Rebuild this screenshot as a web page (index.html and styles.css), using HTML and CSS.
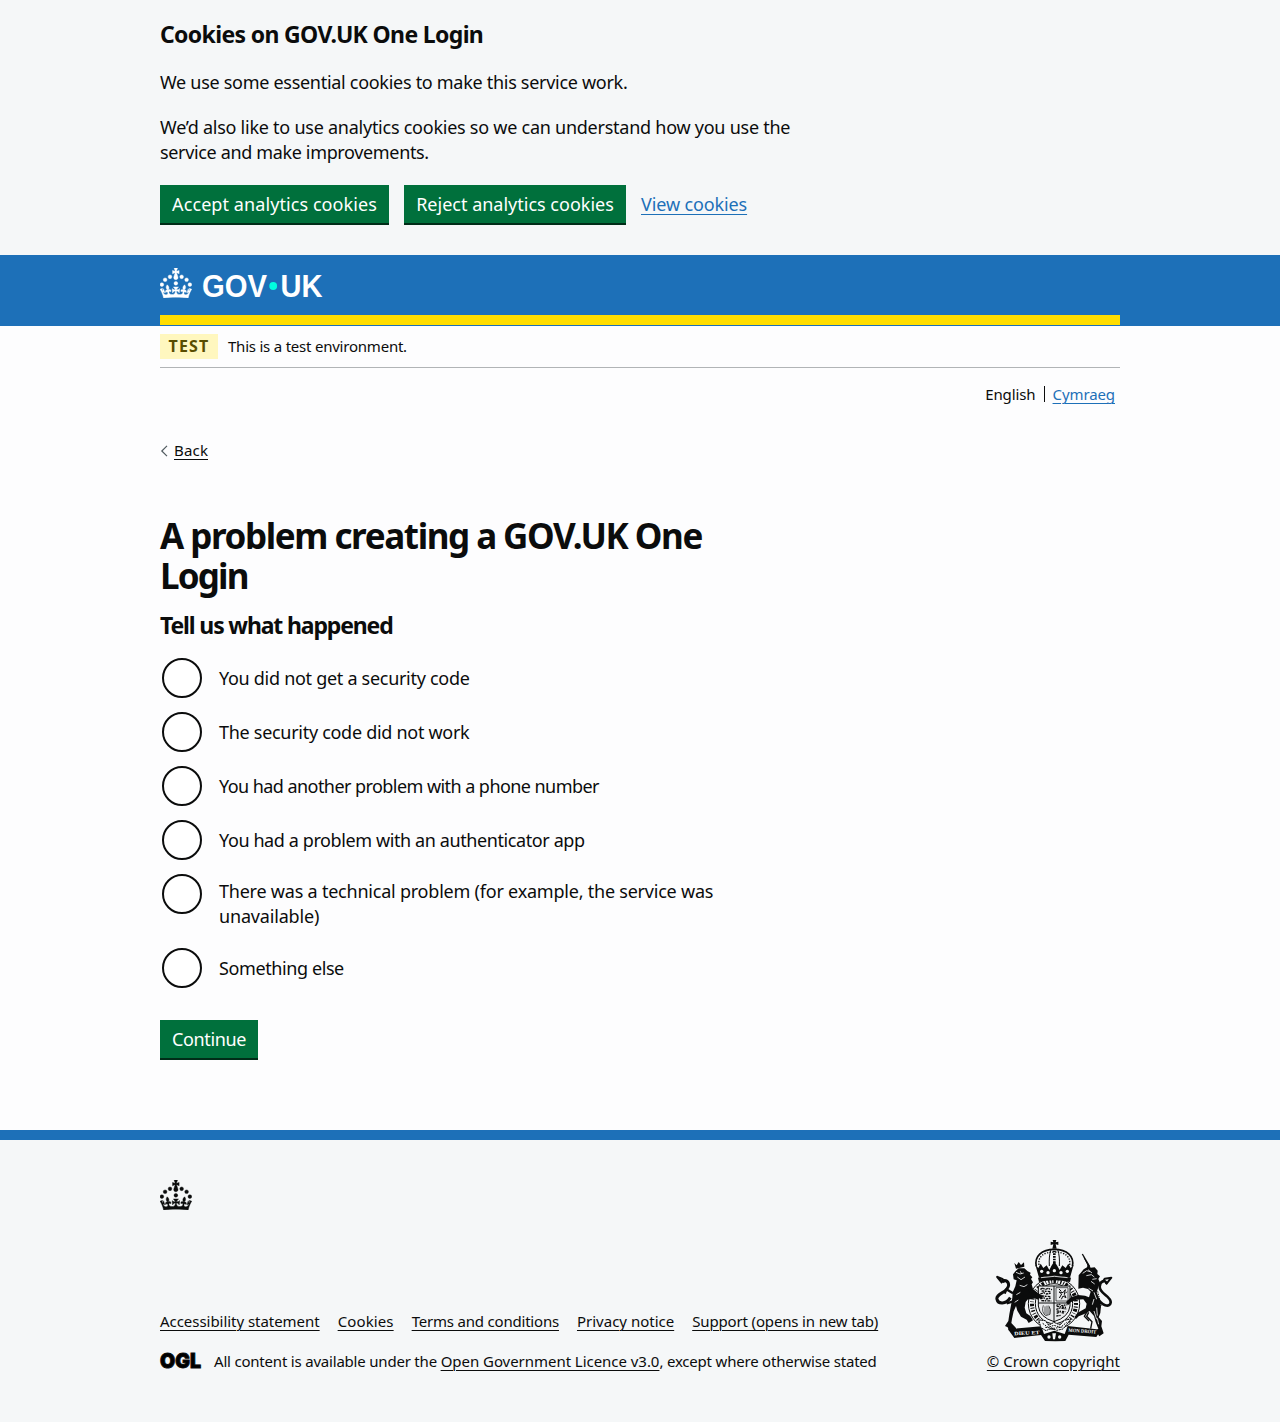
FILE: index.html
```html
<!DOCTYPE html>
<html lang="en">
<head>
<meta charset="utf-8">
<title>A problem creating a GOV.UK One Login</title>
<link rel="stylesheet" href="styles.css">
</head>
<body>
<svg class="sprite" aria-hidden="true">
  <symbol id="crown" viewBox="0 0 64 60">
    <circle cx="20" cy="17.6" r="3.7"/><circle cx="10.2" cy="23.5" r="3.7"/><circle cx="3.7" cy="33.2" r="3.7"/><circle cx="31.7" cy="30.6" r="3.7"/><circle cx="43.3" cy="17.6" r="3.7"/><circle cx="53.2" cy="23.5" r="3.7"/><circle cx="59.7" cy="33.2" r="3.7"/>
    <path d="M33.1,9.8c.2-.1.3-.3.5-.5l4.6,2.4v-6.8l-4.6,1.5c-.1-.2-.3-.3-.5-.5l1.9-5.9h-6.7l1.9,5.9c-.2.1-.3.3-.5.5l-4.6-1.5v6.8l4.6-2.4c.1.2.3.3.5.5l-2.6,8c-.9,2.8,1.2,5.7,4.1,5.7h0c3,0,5.1-2.9,4.1-5.7l-2.6-8ZM37,37.9s-3.4,3.8-4.1,6.1c2.2,0,4.2-.5,6.4-2.8l-.7,8.5c-2-2.8-4.4-4.1-5.7-3.8.1,3.1.5,6.7,5.8,7.2,3.7.3,6.7-1.5,7-3.8.4-2.6-2-4.3-3.7-1.6-1.4-4.5,2.4-6.1,4.9-3.2-1.9-4.5-1.8-7.7,2.4-10.9,3,4,2.6,7.3-1.2,11.1,2.4-1.3,6.2,0,4,4.6-1.2-2.8-3.7-2.2-4.2.2-.3,1.7.7,3.7,3,4.2,1.9.3,4.7-.9,7-5.9-1.3,0-2.4.7-3.9,1.7l2.4-8c.6,2.3,1.4,3.7,2.2,4.5.6-1.6.5-2.8,0-5.3l5,1.8c-2.6,3.6-5.2,8.7-7.3,17.5-7.4-1.1-15.7-1.7-24.5-1.7h0c-8.8,0-17.1.6-24.5,1.7-2.1-8.9-4.7-13.9-7.3-17.5l5-1.8c-.5,2.5-.6,3.7,0,5.3.8-.8,1.6-2.3,2.2-4.5l2.4,8c-1.5-1-2.6-1.7-3.9-1.7,2.3,5,5.2,6.2,7,5.9,2.3-.4,3.3-2.4,3-4.2-.5-2.4-3-3.1-4.2-.2-2.2-4.6,1.6-6,4-4.6-3.7-3.7-4.2-7.1-1.2-11.1,4.2,3.2,4.3,6.4,2.4,10.9,2.5-2.8,6.3-1.3,4.9,3.2-1.8-2.7-4.1-1-3.7,1.6.3,2.3,3.3,4.1,7,3.8,5.4-.5,5.7-4.2,5.8-7.2-1.3-.2-3.7,1-5.7,3.8l-.7-8.5c2.2,2.3,4.2,2.7,6.4,2.8-.7-2.3-4.1-6.1-4.1-6.1h10.6,0Z"/>
  </symbol>
</svg>

<section class="cookies">
  <div class="container">
    <h2 class="cookies-title"><span class="t1">Cookies on GOV.UK One Login</span></h2>
    <p class="body"><span class="t2">We use some essential cookies to make this service work.</span></p>
    <p class="body"><span class="t3">We’d also like to use analytics cookies so we can understand how you use the</span><br><span class="t4">service and make improvements.</span></p>
    <div class="actions">
      <button class="button accept">Accept analytics cookies</button>
      <button class="button reject">Reject analytics cookies</button>
      <a class="link view" href="#">View cookies</a>
    </div>
  </div>
</section>

<header class="header">
  <div class="container header-bar">
    <svg class="crown" width="32" height="30"><use href="#crown"/></svg>
    <svg class="wordmark" width="124" height="30" role="img" aria-label="GOV.UK">
      <text x="0" y="29" textLength="65" lengthAdjust="spacingAndGlyphs">GOV</text>
      <circle cx="71.2" cy="18" r="3.9"/>
      <text x="78.5" y="29" textLength="42" lengthAdjust="spacingAndGlyphs">UK</text>
    </svg>
  </div>
</header>

<div class="container">
  <div class="phase"><strong class="tag">TEST</strong><span class="t5">This is a test environment.</span></div>
  <nav class="languages"><span class="lang-current">English</span><a class="link" href="#">Cymraeg</a></nav>
  <a class="back" href="#"><svg width="8" height="12" viewBox="0 0 8 12"><path d="M7 .8 1.8 6 7 11.2"/></svg><span>Back</span></a>

  <main class="main">
    <h1><span class="t6">A problem creating a GOV.UK One</span><br><span class="t7">Login</span></h1>
    <h2 class="question"><span class="t8">Tell us what happened</span></h2>
    <form class="radios">
      <label class="radio"><i></i><span class="r1">You did not get a security code</span></label>
      <label class="radio"><i></i><span class="r2">The security code did not work</span></label>
      <label class="radio"><i></i><span class="r3">You had another problem with a phone number</span></label>
      <label class="radio"><i></i><span class="r4">You had a problem with an authenticator app</span></label>
      <label class="radio two-line"><i></i><span><span class="r5">There was a technical problem (for example, the service was</span><br><span class="r6">unavailable)</span></span></label>
      <label class="radio"><i></i><span class="r7">Something else</span></label>
    </form>
    <button class="button continue">Continue</button>
  </main>
</div>

<footer class="footer">
  <div class="container">
    <svg class="crown" width="32" height="30"><use href="#crown"/></svg>
    <div class="footer-row">
      <div class="footer-meta">
        <nav class="footer-links"><a class="f1" href="#">Accessibility statement</a><a class="f2" href="#">Cookies</a><a class="f3" href="#">Terms and conditions</a><a class="f4" href="#">Privacy notice</a><a class="f5" href="#">Support (opens in new tab)</a></nav>
        <div class="licence">
          <svg class="ogl" width="41" height="17" role="img" aria-label="OGL"><text x="0" y="15" textLength="41" lengthAdjust="spacingAndGlyphs">OGL</text></svg>
          <span class="f6">All content is available under the <a href="#">Open Government Licence v3.0</a>, except where otherwise stated</span>
        </div>
      </div>
      <div class="copyright">
        <svg class="arms" width="118" height="104" viewBox="45 27 354 312" aria-hidden="true">
          <!-- royal crown -->
          <g class="solid">
            <path d="M218 30h11l-2 7 8-2v10l-8-2 3 13h-13l3-13-8 2v-10l8 2z"/>
            <path d="M174 143q49-13 99 0l-3 13q-47-11-93 0z"/>
            <path d="M166 104l9 10 7-13 8 13 10-8 8 14 6-12 9-14 9 14 7 12 8-14 10 8 8-13 7 13 9-10-11 39q-47-12-93 0z"/>
          </g>
          <g class="cut"><circle cx="185" cy="124" r="5"/><circle cx="204" cy="128" r="5"/><circle cx="223" cy="122" r="5"/><circle cx="243" cy="128" r="5"/><circle cx="262" cy="124" r="5"/></g>
          <path class="cutline" d="M183 143q40-8 80 0"/>
          <g class="line">
            <path d="M169 109c-7-30 16-51 54-51s61 21 54 51" stroke-width="5"/>
            <path d="M177 105c-4-25 14-39 46-39s50 14 46 39" stroke-width="4" stroke-dasharray="4 4"/>
            <path d="M213 58c-5 17-6 28-5 50M233 58c5 17 6 28 5 50" stroke-width="3"/>
            <path d="M223 62v44" stroke-width="8" stroke-dasharray="5 3"/>
          </g>
          <!-- garter and quartered shield -->
          <g class="line">
            <ellipse cx="222" cy="221" rx="77" ry="77" stroke-width="3"/>
            <ellipse cx="222" cy="221" rx="56" ry="60" stroke-width="3"/>
            <ellipse cx="222" cy="221" rx="66" ry="68" stroke-width="12" stroke-dasharray="4 5 3 4 8 5 2 6"/>
          </g>
          <path class="shield" d="M175 168h95v60q-4 34-48 47-43-13-47-47z"/>
          <g class="line" stroke-width="3">
            <path d="M222 168v107M175 219h95"/>
            <path d="M181 178l8-4 6 5 9-4 12 4M181 192l10-4 8 4 16-3M181 207l9-4 9 4 16-3M185 183l28 2M185 198l28 2M184 212l30 1" stroke-width="4" stroke-dasharray="8 2 5 3"/>
            <rect x="228" y="173" width="36" height="40" stroke-width="2"/>
            <path d="M238 204l7-12-8-6 12 2 7-9-3 14 5 10-9-5-5 10M237 177l7 7M256 190l5-5" stroke-width="3"/>
            <path d="M190 226q-7 20 7 31l13-4q5-15-4-26M195 229v25M201 227v28M207 230v22" stroke-width="2"/>
            <path d="M229 226l9-3 7 4 17-3M229 238l12-4 20 3M230 250l10-4 13 4M230 229l28 3M230 243l26 2M229 258l14-2" stroke-width="4" stroke-dasharray="7 2 4 3"/>
          </g>
          <!-- lion supporter -->
          <g class="solid">
            <path d="M99 133l8-10 9-8 17 0 10 9 9 4-2 6 7 8-4 5 6 10-4 6 4 14 16 13 14 8-4 10-19-8-19 4-10 12-3 17 5 17 12 8 8 13-13 8-6-10-17-9-11-18-4-14-7 16-5 23-2 12 14 15 1 12-22-4-4-10-8-4 10-15 3-20 5-27 4-23 1-16 8-18 4-18-9-3z"/>
            <path d="M103 99l7 7 6-10 7 9 9-8 1 13-25 6z"/>
          </g>
          <g class="line" stroke-width="9">
            <path d="M91 203c-14 22-37 19-40 5-5-18 34-20 35-43-1-15-15-16-19-9"/>
            <path d="M67 159l-15-18 15 6 7 10" stroke-width="7"/>
            <path d="M99 190l-20-12-5 13M97 215l-17 5" stroke-width="7"/>
            <path d="M144 205l22-4 10 5M146 181l22 10" stroke-width="7"/>
          </g>
          <g class="cutline"><path d="M108 127l12 5 11-3M112 141l11 8 12-8M121 124l4 8M119 166l13 4 10-6M109 194l12-7M104 217l11-7M136 228l7 8"/></g>
          <!-- unicorn supporter -->
          <g class="line"><path d="M307 72l22 38" stroke-width="4"/><path d="M312 83l13 25" stroke-width="3"/></g>
          <g class="solid">
            <path d="M296 136l15-18 10-6 3-12 8 13 12-1 9 10-1 10 8 7-5 8 5 11-5 14-5 15 8 20 5 20-2 22-5 13 10 11-2 16 7 21-13 9-4-6-16 3 2-8 15-12-8-20-5-18-13-15-16 9-17 7-8 8-5-5 10-14 24-13 3-14-10-13-21 1-17 8-8 9-6-10 15-14 21-7 21 2 12 5 5-17-8-8-15-4-14 3z"/>
          </g>
          <g class="cutline"><path d="M308 130l12-8 10 3M319 137l15-3 9 7M324 119l12 10M333 154l11 8M342 187l8 21M342 207l-5 17M326 175l13 8M350 233l2 24M342 243l8 25M337 148l13-2M352 265l4 18"/></g>
          <g class="line" stroke-width="8">
            <path d="M354 206c9 19 36 29 38 12 2-20-34-26-33-48 1-18 17-23 21-9"/>
            <path d="M378 163l16-20-20 3-6 11" stroke-width="6"/>
            <path d="M323 242l-10 17 14 14M326 247l-6 12 16 16-4 21" stroke-width="4"/>
            <path d="M353 184l10 42-8 20" stroke-width="3" stroke-dasharray="4 3"/>
          </g>
          <!-- scroll -->
          <path class="solid" d="M84 298l100-9 8 23 31-10 31 10 9-24 100 11-14 22-83-7-10 19-30 1-31-1-12-18-80 9z"/>
          <g class="motto"><text x="102" y="314" textLength="77" lengthAdjust="spacingAndGlyphs" transform="rotate(-3 140 307)">DIEU ET</text><text x="265" y="308" textLength="84" lengthAdjust="spacingAndGlyphs" transform="rotate(4 306 303)">MON DROIT</text></g>
          <path class="foliage" d="M176 270l20 2 10 14 16-9 18 8 13-14 20-4-24 30-19 4-15-7-17 8-15-9z"/>
          <path class="line" stroke-width="3" stroke-dasharray="5 3" d="M188 280l16 12 18-6 20 6 18-15M196 292l26 3 25-4"/>
          <g class="cut"><circle cx="207" cy="321" r="5"/><circle cx="239" cy="321" r="5"/><path d="M217 310h11l-3 18h-6z"/></g>
        </svg>
        <a class="f7" href="#">© Crown copyright</a>
      </div>
    </div>
  </div>
</footer>
</body>
</html>
```

FILE: styles.css
```css
* { box-sizing: border-box; }
body { margin: 0; background: #fdfdfe; color: #0b0c0c; font: 18px/25px "Noto Sans", sans-serif; }
h1, h2, p { margin: 0; }
.sprite { display: none; }
.container { width: 960px; margin: 0 auto; }
a { color: inherit; text-decoration: underline; text-decoration-thickness: 1px; text-underline-offset: 3px; }
.link { color: #1d70b8; }
span { white-space: nowrap; }

/* tracking */
.t1 { letter-spacing: -.65px; }
.t2 { letter-spacing: -.29px; }
.t3 { letter-spacing: -.25px; }
.t4 { letter-spacing: -.35px; }
.t5 { letter-spacing: -.22px; }
.t6 { letter-spacing: -1.37px; word-spacing: -.4px; }
.t7 { letter-spacing: -1.85px; }
.t8 { letter-spacing: -1.15px; }
.r1, .r2 { letter-spacing: -.29px; }
.r3 { letter-spacing: -.56px; }
.r4 { letter-spacing: -.4px; }
.r5 { letter-spacing: -.22px; }
.r6 { letter-spacing: -.17px; }
.r7 { letter-spacing: -.4px; }
.f1 { letter-spacing: -.04px; }
.f2 { letter-spacing: .12px; }
.f3 { letter-spacing: -.2px; }
.f5 { letter-spacing: -.15px; }
.f6 { letter-spacing: -.2px; }
.f6 a { letter-spacing: -.04px; }
.f7 { letter-spacing: .05px; }

.cookies { height: 255px; padding-top: 19px; background: #f5f7f8; }
.cookies-title { margin-bottom: 21px; font-size: 23px; line-height: 30px; }
.body { margin-bottom: 20px; }
.actions { display: flex; align-items: center; gap: 15px; height: 40px; margin-top: -1px; }
.button { height: 38px; padding: 0; border: 0; background: #00703c; box-shadow: 0 2px 0 #002d18; color: #fff; font: 18px/38px "Noto Sans", sans-serif; white-space: nowrap; text-align: center; }
.accept { width: 229px; letter-spacing: .08px; }
.reject { width: 222px; }
.view { letter-spacing: -.12px; }

.header { height: 71px; background: #1d70b8; color: #fff; }
.header-bar { display: flex; gap: 10px; height: 70px; padding-top: 13px; border-bottom: 10px solid #ffdd00; }
.crown { display: block; fill: currentColor; stroke: currentColor; stroke-width: .8; }
.wordmark { overflow: visible; fill: #fff; font: bold 31.5px "Liberation Sans", sans-serif; }
.wordmark circle { fill: #00ffe0; }

.phase { display: flex; align-items: center; height: 42px; border-bottom: 1px solid #b1b4b6; font-size: 15px; }
.tag { width: 58px; height: 25px; margin-right: 10px; background: #fff7bf; color: #594d00; font-size: 16px; line-height: 25px; text-align: center; letter-spacing: 1.2px; }
.languages { display: flex; justify-content: flex-end; align-items: center; height: 20px; margin: 16px 5px 0 0; font-size: 15px; line-height: 16px; letter-spacing: -.1px; }
.lang-current { padding-right: 8px; margin-right: 8px; border-right: 1px solid #0b0c0c; }
.back { display: flex; align-items: center; gap: 6px; width: max-content; height: 20px; margin-top: 36px; font-size: 15px; letter-spacing: .2px; text-decoration: none; }
.back svg { margin-top: 1px; }
.back span { border-bottom: 1px solid #0b0c0c; line-height: 18px; }
.back path { fill: none; stroke: #505a5f; stroke-width: 1.2; }

.main { padding: 56px 0 72px; }
h1 { font-size: 35px; line-height: 40px; }
.question { margin-top: 14px; font-size: 23px; line-height: 30px; }
.radios { display: grid; gap: 10px; margin-top: 16px; }
.radio { display: flex; align-items: center; gap: 17px; height: 44px; padding-left: 2px; }
.radio i { flex: none; width: 40px; height: 40px; border: 2px solid #0b0c0c; border-radius: 50%; background: #fff; }
.two-line { height: 64px; align-items: flex-start; padding-top: 2px; }
.two-line > span { margin-top: 5px; }
.continue { display: block; width: 98px; margin-top: 30px; letter-spacing: -.35px; }

.footer { height: 292px; padding-top: 40px; border-top: 10px solid #1d70b8; background: #f5f7f8; font-size: 15px; line-height: 20px; }
.footer-row { display: flex; justify-content: space-between; align-items: flex-end; margin-top: 29px; }
.footer-links { display: flex; gap: 18px; margin-bottom: 20px; white-space: nowrap; }
.footer-meta { margin-bottom: 1px; }
.licence { display: flex; align-items: center; gap: 13px; }
.ogl { overflow: visible; font: 900 20px Inter, sans-serif; stroke: #0b0c0c; stroke-width: .9; }
.copyright { display: flex; flex-direction: column; align-items: flex-end; }
.arms { margin: 0 7px 8px 0; }
.f7 { margin-bottom: 1px; }
.arms .solid { fill: #0b0c0c; }
.arms .line { fill: none; stroke: #0b0c0c; stroke-linejoin: round; }
.arms .cut { fill: #f5f7f8; }
.arms .cutline { fill: none; stroke: #f5f7f8; stroke-width: 2.5; }
.arms .shield { fill: #e9ebec; stroke: #0b0c0c; stroke-width: 3; }
.arms .foliage { fill: #f5f7f8; stroke: #0b0c0c; stroke-width: 3; stroke-dasharray: 6 2; }
.arms .motto { fill: #f5f7f8; font: bold 15px "Liberation Serif", serif; }
```
